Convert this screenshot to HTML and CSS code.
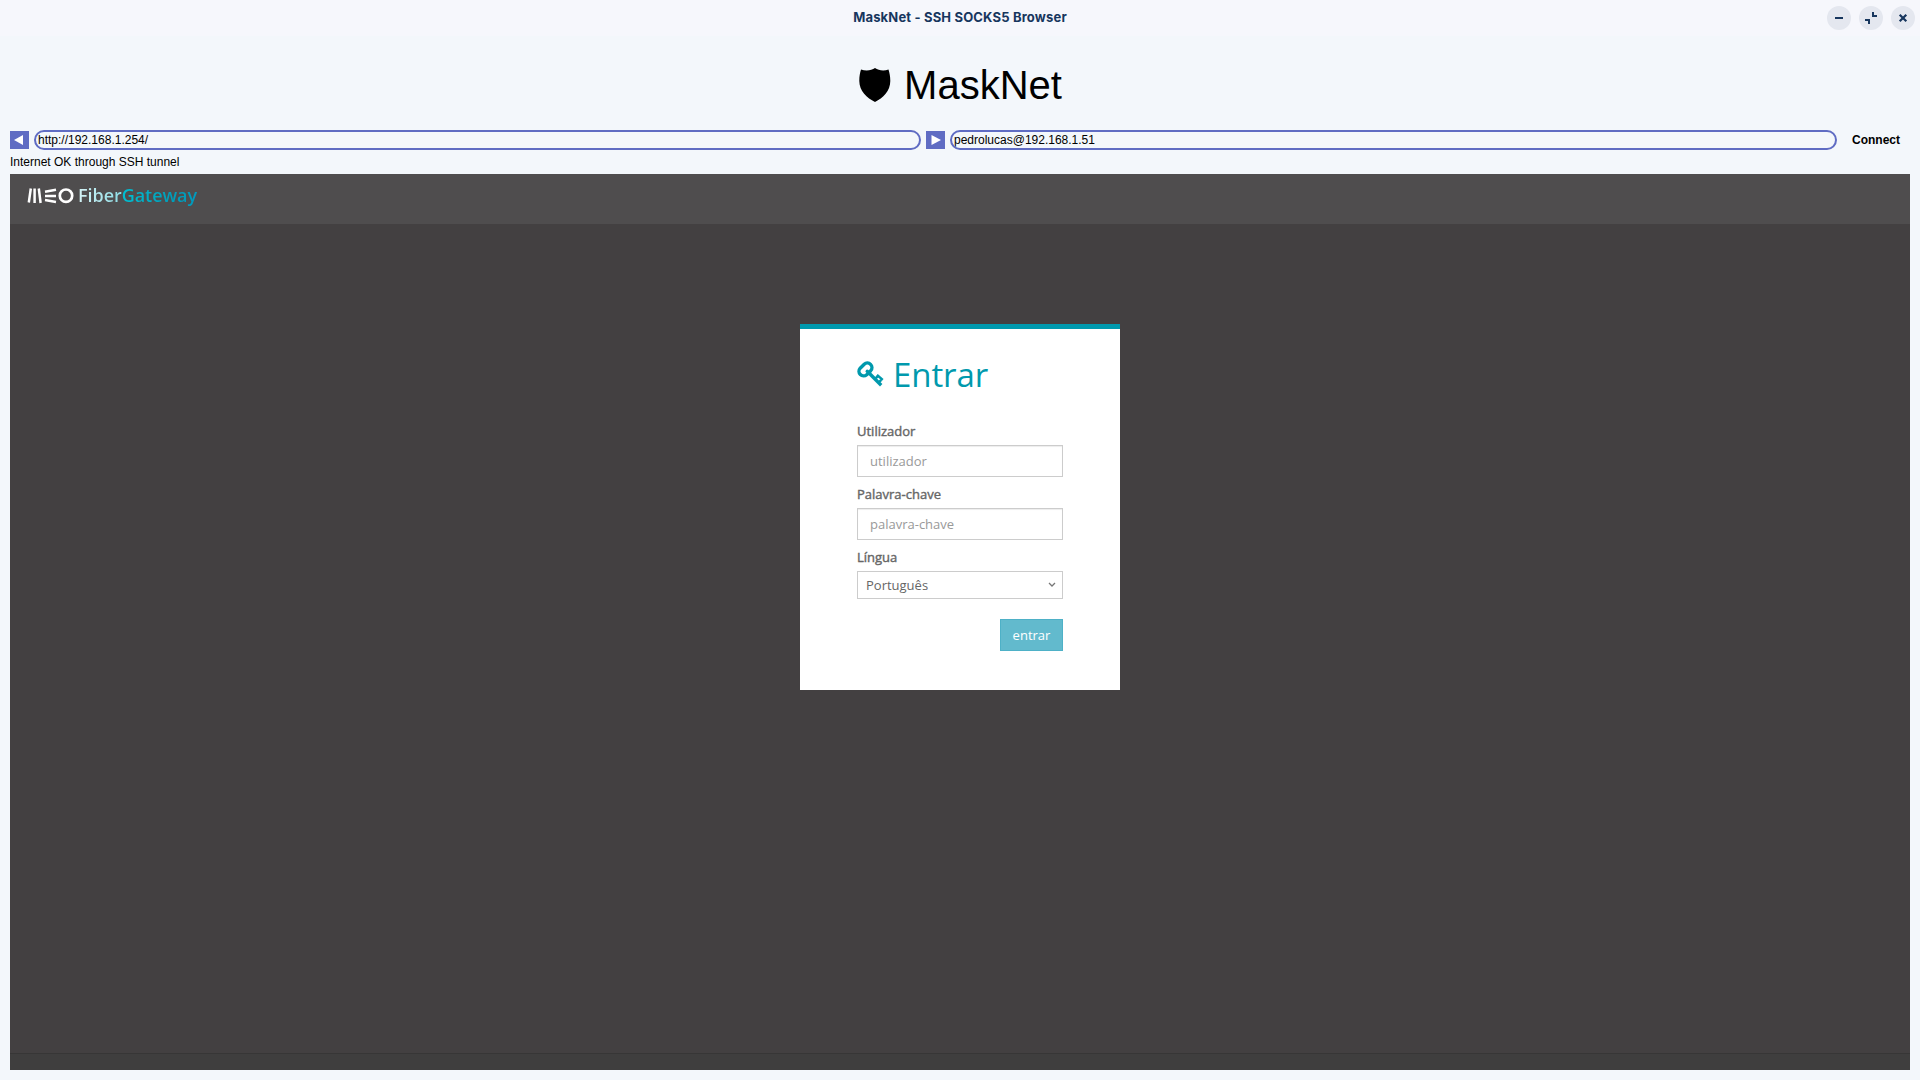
FILE: index.html
```html
<!DOCTYPE html>
<html lang="pt">
<head>
<meta charset="utf-8">
<title>MaskNet - SSH SOCKS5 Browser</title>
<link rel="stylesheet" href="styles.css">
</head>
<body>
<header class="titlebar">
  <span class="title">MaskNet - SSH SOCKS5 Browser</span>
  <div class="controls">
    <span class="control"><svg width="24" height="24"><path d="M8 11h8v2H8z" fill="#17365e"/></svg></span>
    <span class="control"><svg width="24" height="24"><path d="M13 6h2v3h3v2h-5zM6 13h5v5H9v-3H6z" fill="#17365e"/></svg></span>
    <span class="control"><svg width="24" height="24"><path d="M8.700 8.700l6.600 6.600M15.300 8.700l-6.600 6.600" stroke="#17365e" stroke-width="2.200"/></svg></span>
  </div>
</header>
<main class="app">
  <h1 class="brand">
    <svg class="shield" width="32" height="34" viewBox="0 0 32 34"><path d="M16 0C12.500 2.600 7 3.200 2 1.500C1 5 .3 8 .3 13C.3 23 8 30 16 34C24 30 31.300 23 31.300 13C31.300 8 30.500 5 29.500 1.500C25 3.200 19.500 2.600 16 0Z"/></svg>
    <span>MaskNet</span>
  </h1>
  <div class="toolbar">
    <button class="nav"><svg width="19" height="18"><path d="M4 9l9-5v10z" fill="#fff"/></svg></button>
    <input class="address" value="http://192.168.1.254/">
    <button class="nav"><svg width="19" height="18"><path d="M15 9L5.500 4v10z" fill="#fff"/></svg></button>
    <input class="address" value="pedrolucas@192.168.1.51">
    <button class="connect">Connect</button>
  </div>
  <div class="status">Internet OK through SSH tunnel</div>
  <section class="webview">
    <header class="site-header">
      <svg class="meo" width="47" height="16" viewBox="0 0 47 16" fill="none" stroke="#fff" stroke-width="2.500"><path d="M3.800 .5L1.800 14.500M7.600 .5v14.500M11.800 .5l1.800 14.500M18 3.800L29 1.800M18 8h11M18 12l11 2"/><circle cx="39" cy="7.700" r="6.200" stroke-width="2.700"/></svg>
      <span class="gateway">FiberGateway</span>
    </header>
    <div class="stage">
      <form class="card">
        <h2 class="heading">
          <svg width="27" height="26" viewBox="0 0 27 26" fill="none" stroke="#0099ad" stroke-width="3.400"><path d="M3.200 7.200L7.200 3.200A4.600 4.600 0 0 1 13.700 9.700L9.700 13.700A4.600 4.600 0 0 1 3.200 7.200Z"/><circle cx="10.200" cy="10.200" r="1.600" fill="#0099ad" stroke="none"/><path d="M10.500 10.500L24.200 24.200"/><path d="M17.800 18.200L21.500 14.500M21.500 21.700L24.300 18.900" stroke-width="2.500"/><path d="M20 14L25.800 18.800" stroke-width="2.400"/></svg>
          <span>Entrar</span>
        </h2>
        <label class="label">Utilizador</label>
        <input class="field" placeholder="utilizador">
        <label class="label">Palavra-chave</label>
        <input class="field" placeholder="palavra-chave">
        <label class="label">Língua</label>
        <div class="select"><span>Português</span><svg width="8" height="6"><path d="M1 1l3 3 3-3" fill="none" stroke="#777" stroke-width="1.300"/></svg></div>
        <button class="submit" type="button">entrar</button>
      </form>
    </div>
    <footer class="site-footer"></footer>
  </section>
</main>
</body>
</html>
```
FILE: styles.css
```css
* { box-sizing: border-box; }
body { margin: 0; height: 1080px; overflow: hidden; background: #f3f7fb; font: 12px "Liberation Sans", Arial, sans-serif; color: #000; }
button, input { font: inherit; margin: 0; padding: 0; border: 0; outline: 0; border-radius: 0; }
svg { display: block; flex: none; }
.titlebar { height: 36px; background: #f6f7fc; display: grid; grid-template-columns: 1fr auto 1fr; align-items: center; padding: 0 5px; }
.title { grid-column: 2; font: 700 13px/18px Inter, sans-serif; letter-spacing: .17px; color: #17365e; margin-top: -2px; }
.controls { display: flex; gap: 8px; justify-content: flex-end; }
.control { width: 24px; height: 24px; border-radius: 50%; background: #e4e7ef; }
.app { padding: 0 10px; }
.brand { margin: 0; height: 94px; padding: 4px 0 0 1px; display: flex; justify-content: center; align-items: center; gap: 13px; font-weight: 400; font-size: 40px; line-height: 46px; }
.shield { margin-top: -1px; }
.toolbar { display: flex; align-items: center; gap: 5px; height: 20px; }
.nav { width: 19px; height: 18px; background: #5f6cc3; flex: none; }
.address { flex: 1; min-width: 0; height: 20px; border: 2px solid #5f6cc3; border-radius: 10px; background: #f3f7fb; padding: 0 2px; }
.connect { width: 68px; background: none; font-weight: 700; }
.status { height: 24px; line-height: 24px; }
.webview { height: 896px; display: flex; flex-direction: column; background: #434041; font-family: "Open Sans", sans-serif; }
.site-header { height: 50px; background: #4f4d4e; display: flex; padding: 12px 0 0 17px; gap: 4px; }
.meo { margin-top: 2px; }
.gateway { height: 24px; font-size: 18px; line-height: 18px; font-weight: 600; letter-spacing: -.05px; background: linear-gradient(90deg, #d5f2f5 0%, #8edde5 36%, #00bfd2 38%, #00a0bb 75%, #0099bd 100%); -webkit-background-clip: text; color: transparent; }
.stage { flex: 1; padding-top: 100px; }
.card { width: 320px; height: 366px; margin: 0 auto; border-top: 5px solid #0099ad; background: #fff; padding: 22px 57px 0; display: flex; flex-direction: column; font-size: 13px; color: #666; }
.heading { margin: 0 0 25px; height: 46px; display: flex; align-items: center; gap: 9px; color: #0099ad; font-size: 33px; line-height: 46px; font-weight: 400; }
.heading span { padding-top: 1px; letter-spacing: -.1px; }
.label { height: 18px; margin-bottom: 5px; line-height: 18px; -webkit-text-stroke: .4px #666; }
.field { height: 32px; border: 1px solid #ccc; padding: 0 12px; margin-bottom: 8px; box-shadow: inset 0 1px 1px rgba(0,0,0,.075); }
.field::placeholder { color: #999; }
.select { height: 28px; border: 1px solid #ccc; padding: 0 6px 0 8px; display: flex; align-items: center; justify-content: space-between; }
.submit { align-self: flex-end; width: 63px; height: 32px; margin-top: 20px; background: #62bacd; border: 1px solid #4eb1c7; color: #fff; }
.site-footer { height: 17px; background: #3f3e3e; border-top: 1px solid #373636; }
```
